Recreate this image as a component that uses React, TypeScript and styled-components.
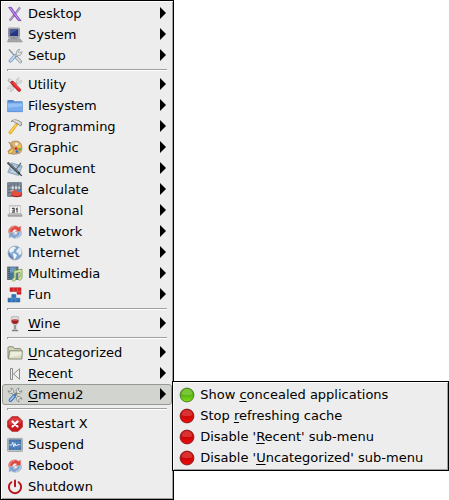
import React from "react";
import styled, { createGlobalStyle, css } from "styled-components";

const GlobalStyle = createGlobalStyle`
  body {
    margin: 0;
    background: #ffffff;
    font-family: "DejaVu Sans", Verdana, sans-serif;
    font-size: 13px;
    color: #000000;
  }
`;

const Menu = styled.ul`
  list-style: none;
  margin: 0;
  padding: 2px 1px;
  width: max-content;
  box-sizing: border-box;
  background: #ededed;
  border: 1px solid #000000;
  box-shadow: inset 1px 1px 0 #ffffff, inset -1px -1px 0 #a0a0a0;
  display: flex;
  flex-direction: column;
`;

const Entry = styled.li`
  position: relative;
`;

const Submenu = styled(Menu)`
  position: absolute;
  left: 100%;
  top: -3px;
  z-index: 1;
`;

const Item = styled.button<{ $active?: boolean; $wide?: boolean }>`
  display: flex;
  align-items: center;
  gap: 5px;
  width: 100%;
  height: 21px;
  padding: 0 ${(p) => (p.$wide ? 23 : 4)}px 0 4px;
  border: 1px solid transparent;
  border-radius: 3px;
  background: none;
  font: inherit;
  line-height: 19px;
  color: inherit;
  text-align: left;
  white-space: nowrap;
  ${(p) =>
    p.$active &&
    css`
      background: #d2d4d0;
      border-color: #969994;
    `}
`;

const Label = styled.span<{ $wide?: boolean }>`
  flex: 1;
  padding-right: ${(p) => (p.$wide ? 0 : 33)}px;
`;

const Mnemonic = styled.span`
  text-decoration: underline;
  text-decoration-thickness: 1px;
  text-underline-offset: 2px;
`;

const Separator = styled.li`
  height: 2px;
  margin: 3px 5px;
  box-sizing: border-box;
  border-top: 1px solid #a0a0a0;
  border-left: 1px solid #a0a0a0;
  background: #ffffff;
`;

const Icon = styled.svg`
  flex: none;
  width: 16px;
  height: 16px;
`;

const Arrow = styled.svg`
  flex: none;
  width: 7px;
  height: 13px;
`;

const ball = (id: string, glow: string, mid: string, dark: string, edge: string) => (
  <>
    <defs>
      <linearGradient id={id} x1="0" y1="0" x2="0" y2="1">
        <stop offset="0" stopColor={dark} />
        <stop offset=".45" stopColor={dark} />
        <stop offset="1" stopColor={mid} />
      </linearGradient>
    </defs>
    <circle cx="8" cy="8" r="6.9" fill={`url(#${id})`} stroke={edge} strokeWidth="1" />
    <path d="M2.6 7.2C2.8 3.8 5 2 8 2s5.2 1.8 5.4 5.2C10 8.4 6 8.4 2.6 7.2Z" fill={glow} opacity=".38" />
  </>
);

const network = (
  <>
    <path d="M1.6 8.8C.8 5 3.8 1.8 7.6 1.8c1.8 0 3 .5 4.1 1.5L13.8 2v5.8H8.2l1.6-1.8C7.8 4.6 5.4 5.8 5.3 8.8Z" fill="#e0473f" stroke="#dba9a5" strokeWidth=".6" />
    <path d="M14.4 7.6c.8 4-2.2 6.6-6 6.6-1.8 0-3-.5-4.1-1.5L2.2 14V8.8h5.6L6.2 10.4c2 1 4.6 0 4.5-2.8Z" fill="#82a3cf" stroke="#a9b8cb" strokeWidth=".6" />
    <path d="M2.7 8.2C2.5 5 4.6 2.8 7.4 2.7" stroke="#f3a29c" strokeWidth=".9" />
    <path d="M13.3 8.2c.2 3-1.8 5-4.6 5.1" stroke="#dbe6f4" strokeWidth=".9" />
  </>
);

const icons: Record<string, React.ReactNode> = {
  desktop: (
    <>
      <path d="m13 1.5-5.2 7-5 6" stroke="#8f7fae" strokeWidth="2.2" />
      <path d="m13.5 1.3-5 6.7" stroke="#c9bedf" strokeWidth=".8" />
      <path d="M1.5 1.3h3l4 6.2 5.7 7.2h-3L6.6 8.8Z" fill="#9252d2" stroke="#6f33ae" strokeWidth=".5" />
      <path d="m3.3 2 4.4 6.2 4.6 5.8" stroke="#d3aef5" strokeWidth=".9" />
      <path d="m5.2 9.6-3.4 5h2l2.8-3.6Z" fill="#a998c5" />
    </>
  ),
  system: (
    <>
      <rect x="1.5" y="1" width="11" height="9.4" rx=".6" fill="#b9bbbe" stroke="#85878a" strokeWidth=".8" />
      <rect x="2.7" y="2.2" width="8.6" height="7" fill="#29357c" />
      <path d="M2.7 2.2h8.6L2.7 7.5Z" fill="#4b5b9b" />
      <path d="M4.5 10.6h5.5l.6 1.2H3.8Z" fill="#8d8f91" />
      <path d="M1.8 11.8h11l2.4 3H.6Z" fill="#b4b6b8" stroke="#7d7f81" strokeWidth=".7" />
      <path d="M2.5 12.8h10M1.9 13.9h11.4" stroke="#88898b" strokeWidth=".5" strokeDasharray="1 .4" />
    </>
  ),
  setup: (
    <>
      <path d="M2 1.5 8.8 9" stroke="#8d9598" strokeWidth="1.3" />
      <path d="m9.2 9.2 4.3 4.5" stroke="#8b969b" strokeWidth="3.2" strokeLinecap="round" />
      <path d="m9.4 9.4 4 4.2" stroke="#dde3e5" strokeWidth="1.7" strokeLinecap="round" />
      <path d="m8.5 7.5-5.2 5.4" stroke="#6c93bd" strokeWidth="3.4" strokeLinecap="round" />
      <path d="m8.4 7.5-5 5.3" stroke="#c3d9ee" strokeWidth="2" strokeLinecap="round" />
      <path d="m8.2 8.6 1.2-2.3c-.5-2.9 1-4.9 3.4-4.9l-1.6 2.4 1.2 1.3 2.5-1.5c.2 2.8-1.7 4.4-4.1 4Z" fill="#e1e5e6" stroke="#818b8e" strokeWidth=".7" />
    </>
  ),
  utility: (
    <>
      <path d="M3.4 12.6 11.6 4" stroke="#bcbdbb" strokeWidth="2.6" />
      <path d="M9.2 4.8C8.8 2.4 10 .8 12.3.9L11 3l1.6 1.5 2.1-1.3c.4 2.5-1.5 4-4 3.5ZM6.6 10.8c.3 2.4-1.2 4-3.5 3.8l1.2-2-1.5-1.5-2.1 1.1c-.3-2.3 1.6-3.9 3.8-3.4Z" fill="#e0e0de" stroke="#babbb9" strokeWidth=".6" />
      <path d="m2.5 3.2 4 3.7" stroke="#b5b5b3" strokeWidth="3.7" strokeLinecap="round" />
      <path d="m3 3 3.4 3.2" stroke="#e4e4e1" strokeWidth="2" strokeLinecap="round" />
      <path d="m5.2 5.6 7 7.3" stroke="#b81f22" strokeWidth="3.6" strokeLinecap="round" />
      <path d="m5.3 5.5 6.9 7.3" stroke="#e32b2d" strokeWidth="2.5" strokeLinecap="round" />
      <path d="m5.9 5.1 6.6 6.9" stroke="#ff8980" strokeWidth=".6" />
    </>
  ),
  folder: (
    <>
      <path d="M.3 14V2.8Q.3 2 1.1 2h5l1.3 1.3h7.4q.9 0 .9.9V14Z" fill="#5489d0" />
      <path d="M.8 4.8h14.4V13.6H.8Z" fill="#76abee" />
      <path d="M.8 4.8h14.4v3.5L.8 9.8Z" fill="#96c1f6" />
      <path d="M.3 13.7h15.4M.8 4.9h14.4" stroke="#5f96da" strokeWidth=".7" />
    </>
  ),
  hammer: (
    <>
      <path d="m9.2 4.2 1.7 1.2-6.6 9.2c-1.2 1-3.2-.3-2.3-1.8Z" fill="#f4bf24" stroke="#c9962a" strokeWidth=".6" />
      <path d="m9 6-5.9 7.3" stroke="#ffe680" strokeWidth=".8" />
      <path d="M4 2.4C6.2.6 8.7.4 11 1.5l3.3 1.8.4 2.8-1.8.7-1.5-1.6L9 4C7.3 2.8 6 2.2 4 2.4Z" fill="#d2d4d0" stroke="#777b75" strokeWidth=".8" />
      <path d="M6.4 1.9c2-.6 3.8.4 6 1.8" stroke="#f3f3ef" strokeWidth=".7" />
    </>
  ),
  graphic: (
    <>
      <path d="M5 1.8c3-1.2 7.5-1 9 2.1 1.5 3.2 1.2 8.2-1.7 9.4-3 1.1-8 1.4-10.5-.7C0 11.2 2 9.8 4 9.1 5.2 8.2 2 3.6 5 1.8Z" fill="#dcb377" stroke="#9c7542" strokeWidth=".7" />
      <circle cx="9.5" cy="4" r="1.5" fill="#f7f1de" />
      <circle cx="12.5" cy="6.4" r="1.3" fill="#f0d32d" />
      <circle cx="12.6" cy="9.3" r="1.3" fill="#65a928" />
      <circle cx="10" cy="11.6" r="1.5" fill="#347bc7" />
      <circle cx="9" cy="8.6" r="1.5" fill="#dc2e26" />
      <path d="m1.8 1.8 4.8 6.4" stroke="#a48a62" strokeWidth="1.2" />
      <path d="M1.6 13.8c.2-3.4 2.4-5 5-5 .6 2.8-1.6 4.8-5 5Z" fill="#f4d067" stroke="#98681f" strokeWidth=".5" />
    </>
  ),
  document: (
    <>
      <path d="m4.6 1.8 10.6 3.2-3.6 9.6L.8 11.4Z" fill="#9fb9d1" stroke="#8399ad" strokeWidth=".7" />
      <path d="m4.7 5 8.8 2.8M3.8 7.4l8.8 2.8m-9.6-.4 8.8 2.8M8.4 3.7 5 12m6-7.4-3.4 8.2" stroke="#d4e2ee" strokeWidth=".7" />
      <path d="m1.3 2.2 10.6 10" stroke="#4d5459" strokeWidth="2.4" strokeLinecap="round" />
      <path d="m2 2.2 9 8.4" stroke="#899398" strokeWidth=".6" />
      <path d="m11.5 12 3.3 2.9" stroke="#313638" strokeWidth="1.2" />
      <path d="M14 1.8 9.4 8" stroke="#56616b" strokeWidth="1.1" />
    </>
  ),
  calculate: (
    <>
      <rect x="1" y="1" width="13" height="13" fill="#dce1e4" stroke="#39444f" strokeWidth="1.2" />
      <path d="M1 1h13v2.4H1Zm0 0h2.4v13H1Z" fill="#7c8998" />
      <path d="M4 1v13M7.4 1v13M10.8 1v13M1 4h13M1 7.3h13M1 10.6h13" stroke="#4d5a68" strokeWidth=".7" />
      <ellipse cx="9.6" cy="11.8" rx="5.6" ry="3.5" fill="#a92421" />
      <ellipse cx="9.4" cy="11" rx="5.4" ry="3.1" fill="#e2513f" />
      <path d="M9.8 10V7c3 .2 5 1.2 5.3 3Z" fill="#4f83bc" />
    </>
  ),
  personal: (
    <>
      <path d="M2.4 2.6h11.2v8.2H2.4Z" fill="#f6f6f4" stroke="#b8bab8" strokeWidth=".7" />
      <path d="M2.8 3h10.4" stroke="#a2a4a2" strokeWidth="1" strokeDasharray="1 .8" />
      <path d="M4.9 5.4h2.3v3.7H4.9m.5-1.9h1.8M8.9 6.2l1.2-.8v4.1" stroke="#434543" strokeWidth="1.1" />
      <path d="M2 10.4h12l1.2 1.6H.8Z" fill="#d1d2d0" stroke="#a5a7a4" strokeWidth=".6" />
      <path d="M.8 11.8h14.4v1.8H.8Z" fill="#8d908d" />
      <path d="M1.3 12.2h13.4" stroke="#c3c5c2" strokeWidth=".6" />
    </>
  ),
  network,
  internet: (
    <>
      <circle cx="8" cy="8" r="6.9" fill="#7fa6d2" stroke="#98a1ab" strokeWidth=".8" />
      <path d="M2 5.4C3.4 2 6 1.5 8 1.8l1 1.6-2 .8-.3 2.2L4.5 7l-.3 2.1Z" fill="#eef4f8" />
      <path d="m9.5 5.3 2.9-2.8c2 1.5 2.8 4.4 1.8 6.6l-2.3 1.5-.5-2.5-2-.7Z" fill="#e6edf3" />
      <path d="m5.8 8 3.1 1 1 1.7-1.6 2.5-1.2 1.2-.7-3.1Z" fill="#f4f7fa" />
      <path d="M2 8c.4 2.6 2 4.4 4 5.3" stroke="#4c76b0" strokeWidth="1.1" />
    </>
  ),
  multimedia: (
    <>
      <rect x=".6" y="1" width="10.4" height="12.6" fill="#46749f" stroke="#5f6b74" strokeWidth=".8" />
      <path d="M1.8 1.6v11.6M9.8 1.6v4" stroke="#343c42" strokeWidth="1.4" />
      <path d="M1.8 1.8v11M9.8 1.8v4" stroke="#c2cbd0" strokeWidth=".9" strokeDasharray="1 1" />
      <path d="M3 1.5h5.8v5H3Z" fill="#6f9bc0" />
      <path d="m7 4.8 8-1.6v8.4c0 3-3.8 3.2-3.8 1.1 0-1.3 1.1-1.6 1.8-1.6V6.4l-4 .8v5.4c0 3-3.8 3.2-3.8 1.1 0-1.2 1-1.7 1.8-1.7Z" fill="#cfe8a9" stroke="#7ca04f" strokeWidth=".9" />
    </>
  ),
  fun: (
    <>
      <path d="M3 .8h11v6.4h-4V4.4H3Z" fill="#d82427" stroke="#a9191d" strokeWidth=".5" />
      <path d="M6.7.8v3.6M10.3.8v3.6H14" stroke="#ef7670" strokeWidth=".5" />
      <path d="M4.8 7.6h4v3.6h4V15H1v-3.8h3.8Z" fill="#3374bc" stroke="#215287" strokeWidth=".5" />
      <path d="M4.8 15v-3.8h4V15" stroke="#7da9da" strokeWidth=".5" />
    </>
  ),
  wine: (
    <>
      <path d="M4.7.7h6.6c1.2 4.2.2 7.5-2.5 8.1v4.5l2.3 1.3H4.9l2.3-1.3V8.8C4.5 8.2 3.5 5 4.7.7Z" fill="#dedfdf" stroke="#a3a4a3" strokeWidth=".7" />
      <path d="M4.6 3.9h6.8c.2 2.5-.9 4.1-3.4 4.1S4.4 6.4 4.6 3.9Z" fill="#a61d20" />
      <ellipse cx="8" cy="3.9" rx="3.2" ry=".8" fill="#cc6562" />
      <path d="M8 9v4.5M5 14.7h6" stroke="#727372" strokeWidth="1" />
    </>
  ),
  openFolder: (
    <>
      <path d="M1 13.5V2.6Q1 1.8 1.8 1.8h4.4l1.2 1.8h5.8q.8 0 .8.8V6" fill="#d3d5bb" stroke="#7e836c" strokeWidth=".9" />
      <path d="M2.6 5.8h12.8l-.6 8.2H1.4Z" fill="#dcdec4" stroke="#7e836c" strokeWidth=".9" />
      <path d="M3.5 6.7h11l-.3 3.4L3 12Z" fill="#edeedc" />
    </>
  ),
  recent: (
    <path d="M3.5 2.5h2v11h-2ZM12.5 2.8v10.4L6.5 8Z" fill="#f1f1f0" stroke="#8a8c8a" strokeWidth="1" />
  ),
  tools: (
    <>
      <path d="m4.4 4.6 7.6 7.4" stroke="#737875" strokeWidth="2.6" />
      <path d="m4.4 4.6 7.6 7.4" stroke="#e3e5e3" strokeWidth="1.4" />
      <path d="M3.8 1.1C6.2 1.3 7.2 3.2 6.5 5.1L5.2 6.4C3.2 7 1.2 5.9 1.1 3.6l2 1.3 1.6-1.6ZM12.2 14.9c-2.4-.2-3.4-2.1-2.7-4l1.3-1.3c2-.6 4 .5 4.1 2.8l-2-1.3-1.6 1.6Z" fill="#e3e5e3" stroke="#737875" strokeWidth=".7" />
      <path d="M10 5.8 7.4 8.6" stroke="#737875" strokeWidth="2" />
      <path d="M12 1.1C9.7 1.2 8.7 3.2 9.4 5.1l1.4 1.3c2 .6 4-.5 4.1-2.8l-2 1.3-1.6-1.6Z" fill="#e3e5e3" stroke="#737875" strokeWidth=".7" />
      <path d="m7 9.2-3.6 4" stroke="#3470b4" strokeWidth="3.6" strokeLinecap="round" />
      <path d="m6.7 9.4-3.2 3.6" stroke="#a3c8ec" strokeWidth="1.8" strokeLinecap="round" />
    </>
  ),
  close: (
    <>
      <path d="M4.9.7h6.2l4.2 4.2v6.2l-4.2 4.2H4.9L.7 11.1V4.9Z" fill="#c9171d" stroke="#ad1a1e" strokeWidth=".8" strokeLinejoin="round" />
      <path d="M5 1.5h6l3.5 3.6v2L1.5 9V5Z" fill="#ed6869" opacity=".45" />
      <path d="m5.5 5.5 5 5m0-5-5 5" stroke="#ffffff" strokeWidth="2.2" strokeLinecap="round" />
    </>
  ),
  monitor: (
    <>
      <rect x=".6" y="1.4" width="14.8" height="13" rx=".6" fill="#d2d5d5" stroke="#9b9fa0" strokeWidth=".9" />
      <rect x="2" y="2.8" width="12" height="10" fill="#3f74b0" stroke="#456d98" strokeWidth=".7" />
      <path d="M5 3v10M8 3v10M11 3v10M2 5.5h12M2 10h12" stroke="#6f98c8" strokeWidth=".5" />
      <path d="M2.3 8h2.4L5.8 5.4l1 4.4L8 6.4l1 2.6 1-1.2h3.4" stroke="#e6f1ff" strokeWidth="1" />
    </>
  ),
  power: (
    <>
      <path d="M4.3 3.2a6.1 6.1 0 1 0 7.4 0" stroke="#b9161b" strokeWidth="2" strokeLinecap="round" />
      <path d="M8 1.5v5.8" stroke="#b9161b" strokeWidth="2" strokeLinecap="round" />
    </>
  ),
  on: ball("on", "#b5ed7b", "#7fe01c", "#55ae10", "#4b7d22"),
  off: ball("off", "#f77b78", "#f00c0c", "#c90606", "#8b2020"),
};

type MenuEntry = { text: string; icon: string; more?: boolean; children?: MenuEntry[] };

const settings: MenuEntry[] = [
  { text: "Show _concealed applications", icon: "on" },
  { text: "Stop _refreshing cache", icon: "off" },
  { text: "Disable '_Recent' sub-menu", icon: "off" },
  { text: "Disable '_Uncategorized' sub-menu", icon: "off" },
];

const groups: MenuEntry[][] = [
  [
    { text: "Desktop", icon: "desktop", more: true },
    { text: "System", icon: "system", more: true },
    { text: "Setup", icon: "setup", more: true },
  ],
  [
    { text: "Utility", icon: "utility", more: true },
    { text: "Filesystem", icon: "folder", more: true },
    { text: "Programming", icon: "hammer", more: true },
    { text: "Graphic", icon: "graphic", more: true },
    { text: "Document", icon: "document", more: true },
    { text: "Calculate", icon: "calculate", more: true },
    { text: "Personal", icon: "personal", more: true },
    { text: "Network", icon: "network", more: true },
    { text: "Internet", icon: "internet", more: true },
    { text: "Multimedia", icon: "multimedia", more: true },
    { text: "Fun", icon: "fun", more: true },
  ],
  [{ text: "_Wine", icon: "wine", more: true }],
  [
    { text: "_Uncategorized", icon: "openFolder", more: true },
    { text: "_Recent", icon: "recent", more: true },
    { text: "_Gmenu2", icon: "tools", more: true, children: settings },
  ],
  [
    { text: "Restart X", icon: "close" },
    { text: "Suspend", icon: "monitor" },
    { text: "Reboot", icon: "network" },
    { text: "Shutdown", icon: "power" },
  ],
];

// An underscore marks the letter that follows it as the keyboard mnemonic.
function MenuText({ text }: { text: string }) {
  const at = text.indexOf("_");
  if (at < 0) return <>{text}</>;
  return (
    <>
      {text.slice(0, at)}
      <Mnemonic>{text[at + 1]}</Mnemonic>
      {text.slice(at + 2)}
    </>
  );
}

function MenuRow({ entry, wide }: { entry: MenuEntry; wide?: boolean }) {
  return (
    <Entry role="none">
      <Item
        type="button"
        role="menuitem"
        $active={!!entry.children}
        $wide={wide}
        aria-haspopup={entry.more ? "menu" : undefined}
        aria-expanded={entry.children ? true : undefined}
      >
        <Icon viewBox="0 0 16 16" fill="none" aria-hidden="true">
          {icons[entry.icon]}
        </Icon>
        <Label $wide={wide}>
          <MenuText text={entry.text} />
        </Label>
        {entry.more && (
          <Arrow viewBox="0 0 7 13" aria-hidden="true">
            <path d="M0 0 6 6 0 12Z" fill="#000000" />
          </Arrow>
        )}
      </Item>
      {entry.children && (
        <Submenu role="menu" aria-label="Gmenu2">
          {entry.children.map((child) => (
            <MenuRow key={child.text} entry={child} wide />
          ))}
        </Submenu>
      )}
    </Entry>
  );
}

export default function App() {
  return (
    <>
      <GlobalStyle />
      <Menu role="menu" aria-label="Applications">
        {groups.map((group, index) => (
          <React.Fragment key={index}>
            {index > 0 && <Separator role="separator" />}
            {group.map((entry) => (
              <MenuRow key={entry.text} entry={entry} />
            ))}
          </React.Fragment>
        ))}
      </Menu>
    </>
  );
}
